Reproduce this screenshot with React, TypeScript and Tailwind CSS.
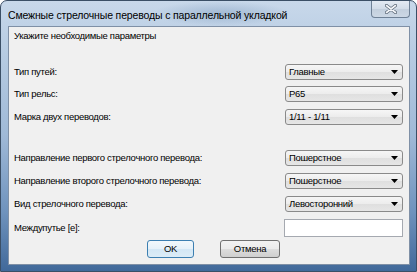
import React from "react";

const Arrow = () => (
  <svg width="7" height="4" viewBox="0 0 7 4" className="block">
    <path d="M0 0H7L3.5 4Z" fill="#000" />
  </svg>
);

function Combo({ value }: { value: string }) {
  return (
    <div className="flex h-[16px] w-[118px] items-center justify-between rounded-[3px] border border-[#8a8a8a] bg-[linear-gradient(180deg,#f6f6f6_0%,#ececec_50%,#dfdfdf_51%,#e6e6e6_100%)] pl-[3px] pr-[4px]">
      <span className="text-[9.5px] leading-[12px] tracking-[-0.3px] text-black">{value}</span>
      <Arrow />
    </div>
  );
}

function Row({ label, mt, children, h = "h-[16px]" }: { label: string; mt: string; children: React.ReactNode; h?: string }) {
  return (
    <div className={`flex ${h} ${mt} items-center justify-between`}>
      <span className="text-[9.5px] leading-[12px] tracking-[-0.3px] text-black">{label}</span>
      {children}
    </div>
  );
}

export default function App() {
  return (
    <div
      className="relative h-[272px] w-[417px] overflow-hidden rounded-t-[7px] border border-[#3b4f66] bg-[linear-gradient(180deg,#c8d8ea_0%,#b6cbe2_20%,#9fb9d7_50%,#6f93bd_78%,#41699a_100%)] pb-[6px] pl-[7px] pr-[6px] pt-[25px]"
      style={{ fontFamily: '"Liberation Sans", Arial, sans-serif' }}
    >
      <div className="pointer-events-none absolute left-[150px] top-0 h-[25px] w-[140px] bg-[radial-gradient(ellipse_at_center,rgba(120,150,185,0.45)_0%,rgba(120,150,185,0)_70%)]" />
      <div className="absolute left-[7px] top-[6px] text-[10.5px] leading-[16px] tracking-[-0.15px] text-black">
        Смежные стрелочные переводы с параллельной укладкой
      </div>
      <div className="absolute right-[6px] top-0 flex h-[17px] w-[39px] items-center justify-center rounded-b-[4px] border border-t-0 border-[#6f8196] bg-[linear-gradient(180deg,#e3eaf3_0%,#d2dce8_50%,#c3cfdd_51%,#cdd8e5_100%)]">
        <svg width="12" height="10" viewBox="0 0 12 10">
          <path d="M1.5 1.5L10.5 8.5M10.5 1.5L1.5 8.5" stroke="#5d6a79" strokeWidth="3.2" strokeLinecap="round" />
          <path d="M1.5 1.5L10.5 8.5M10.5 1.5L1.5 8.5" stroke="#f4f6f9" strokeWidth="1.6" strokeLinecap="round" />
        </svg>
      </div>
      <div className="flex h-full w-full flex-col border border-[#7f90a6] bg-[#f0f0f0] pl-[5px] pr-[6px] pt-[2px]">
        <div className="h-[13px] text-[9.5px] leading-[13px] tracking-[-0.3px] text-black">Укажите необходимые параметры</div>
        <Row label="Тип путей:" mt="mt-[22px]"><Combo value="Главные" /></Row>
        <Row label="Тип рельс:" mt="mt-[6px]"><Combo value="Р65" /></Row>
        <Row label="Марка двух переводов:" mt="mt-[7px]"><Combo value="1/11 - 1/11" /></Row>
        <Row label="Направление первого стрелочного перевода:" mt="mt-[25px]"><Combo value="Пошерстное" /></Row>
        <Row label="Направление второго стрелочного перевода:" mt="mt-[7px]"><Combo value="Пошерстное" /></Row>
        <Row label="Вид стрелочного перевода:" mt="mt-[7px]"><Combo value="Левосторонний" /></Row>
        <Row label="Междупутье [е]:" mt="mt-[7px]" h="h-[18px]">
          <div className="h-[18px] w-[119px] border border-[#a5a9b0] bg-white" />
        </Row>
        <div className="mt-[3px] flex h-[18px] items-center">
          <button className="ml-[133px] flex h-[18px] w-[47px] items-center justify-center rounded-[3px] border border-[#3c7fb1] bg-[linear-gradient(180deg,#f2f8fc_0%,#e6f1f9_50%,#d3e7f5_51%,#dcecf7_100%)] text-[9.5px] leading-[12px] tracking-[-0.3px] text-black">
            OK
          </button>
          <button className="ml-[26px] flex h-[18px] w-[60px] items-center justify-center rounded-[3px] border border-[#707070] bg-[linear-gradient(180deg,#f2f2f2_0%,#ebebeb_50%,#dddddd_51%,#cfcfcf_100%)] text-[9.5px] leading-[12px] tracking-[-0.3px] text-black">
            Отмена
          </button>
        </div>
      </div>
    </div>
  );
}
